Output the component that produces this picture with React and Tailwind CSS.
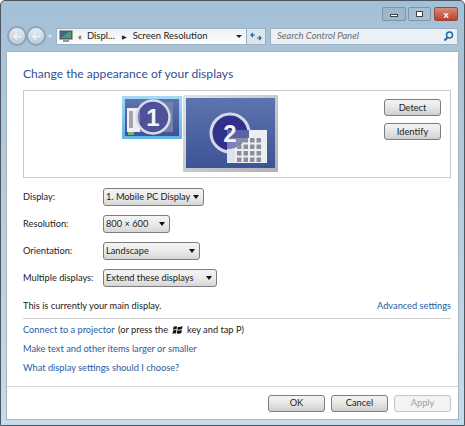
import React from "react";

const font = { fontFamily: 'Lato, "Noto Sans", sans-serif' };

function Btn({ children, disabled }) {
  return (
    <div className={`w-[57px] h-[17px] rounded-[3px] border flex items-center justify-center text-[9.25px] ${disabled ? "border-[#c4c4c4] bg-[#f3f3f3] text-[#a0a0a0]" : "border-[#7d7d7d] bg-gradient-to-b from-[#f4f4f4] via-[#e6e6e6] to-[#cfcfcf] text-[#222]"}`}>
      {children}
    </div>
  );
}

function Select({ w, label }) {
  return (
    <div className={`${w} h-[18px] rounded-[3px] border border-[#7d7d7d] bg-gradient-to-b from-[#f4f4f4] via-[#ebebeb] to-[#d6d6d6] flex items-center justify-between pl-[2px] pr-[4px] text-[9.25px] text-[#222]`}>
      <span className="whitespace-nowrap">{label}</span>
      <span className="w-0 h-0 border-l-[3px] border-r-[3px] border-t-[4px] border-l-transparent border-r-transparent border-t-[#111]" />
    </div>
  );
}

function Row({ label, w, value }) {
  return (
    <div className="flex items-center h-[18px]">
      <span className="w-[80px] text-[9.25px] text-[#222]">{label}</span>
      <Select w={w} label={value} />
    </div>
  );
}

function NavBall() {
  return (
    <div className="w-[20px] h-[20px] rounded-full border-2 border-[#8fa3b4] bg-gradient-to-b from-[#e4ecf2] to-[#bccbd8] flex items-center justify-center -mr-[1px]">
      <svg width="9" height="9" viewBox="0 0 9 9"><path d="M1 4.500h7M4 1.500l-3 3 3 3" stroke="#eef2f6" strokeWidth="1.600" fill="none" /></svg>
    </div>
  );
}

function Monitors() {
  const cells = [];
  for (let r = 0; r < 4; r++) for (let c = 0; c < 4; c++) cells.push(<rect key={`${r}-${c}`} x={117 + c * 6.500} y={44 + r * 6.500} width="4.500" height="4.500" fill="#8a8f9c" />);
  return (
    <svg width="160" height="80" viewBox="0 0 160 80">
      <defs>
        <linearGradient id="mg" x1="0" y1="0" x2="0" y2="1"><stop offset="0" stopColor="#5d74b0" /><stop offset="1" stopColor="#3d5395" /></linearGradient>
        <linearGradient id="sel" x1="0" y1="0" x2="0" y2="1"><stop offset="0" stopColor="#a8d8f4" /><stop offset="1" stopColor="#5fb4e8" /></linearGradient>
        <linearGradient id="fr" x1="0" y1="0" x2="1" y2="1"><stop offset="0" stopColor="#e0e2e4" /><stop offset="1" stopColor="#aeb2b6" /></linearGradient>
      </defs>
      <rect x="2" y="2" width="60" height="43" rx="1" fill="url(#sel)" />
      <rect x="5" y="5" width="54" height="37" fill="url(#mg)" />
      <rect x="7" y="14" width="26" height="24" fill="#f0f0f2" />
      <rect x="9" y="17" width="4" height="17" fill="#a4a4b0" />
      <rect x="20" y="8" width="33" height="30" fill="#7481ad" />
      <rect x="8" y="38" width="6" height="3" fill="#7fae6c" />
      <circle cx="33" cy="23" r="16.500" fill="#35368c" fillOpacity="0.6" stroke="#d9dcea" strokeWidth="2.500" />
      <text x="33" y="31.500" textAnchor="middle" fontFamily="Liberation Sans, sans-serif" fontWeight="700" fontSize="24" fill="#f4f4f8">1</text>
      <rect x="63" y="1" width="95" height="77" rx="1" fill="url(#fr)" />
      <rect x="66" y="4" width="89" height="70" fill="url(#mg)" />
      <circle cx="110" cy="39" r="19" fill="#2f318a" stroke="#d4d8e8" strokeWidth="3" />
      <rect x="107" y="36" width="40" height="33" fill="#eceef2" />
      <rect x="107" y="36" width="22" height="8" fill="#5d68a4" />
      <rect x="107" y="44" width="8" height="24" fill="#e0e2ea" />
      <path d="M107 36h20.500a19 19 0 0 1-20.500 19z" fill="#5a5fa8" fillOpacity="0.75" />
      {cells}
      <text x="110" y="48" textAnchor="middle" fontFamily="Liberation Sans, sans-serif" fontWeight="700" fontSize="24" fill="#f4f4f8">2</text>
    </svg>
  );
}

export default function App() {
  return (
    <div style={font} className="w-[465px] h-[426px] bg-gradient-to-b from-[#a4c0d6] to-[#c6dbec] border border-[#4c5660] rounded-t-[5px] overflow-hidden flex flex-col">
      <div className="flex justify-end pr-[6px] pt-[6px] h-[25px] gap-[2px]">
        <div className="w-[24px] h-[14px] rounded-[2px] border border-[#7d94aa] bg-[#9db7cd] flex items-center justify-center"><span className="w-[8px] h-[3px] border border-[#444] bg-white mt-[3px]" /></div>
        <div className="w-[23px] h-[14px] rounded-[2px] border border-[#7d94aa] bg-[#a6bfd3] flex items-center justify-center mr-[1px]"><span className="w-[7px] h-[6px] border border-[#444] bg-white" /></div>
        <div className="w-[24px] h-[14px] rounded-[2px] border border-[#9b4a3a] bg-gradient-to-b from-[#d98a78] to-[#b8402a] flex items-center justify-center text-white text-[10px] font-bold leading-none">x</div>
      </div>
      <div className="flex items-center h-[25px] pl-[6px] pr-[6px] pb-[5px]">
        <NavBall />
        <NavBall />
        <span className="ml-[3px] w-0 h-0 border-l-[2px] border-r-[2px] border-t-[3px] border-l-transparent border-r-transparent border-t-[#dbe6ee]" />
        <div className="ml-[4px] w-[191px] h-[17px] bg-gradient-to-b from-[#eef3f7] to-[#fbfcfd] border border-[#9fb2c2] flex items-center text-[9.5px] text-[#222]">
          <svg width="14" height="13" viewBox="0 0 14 13" className="ml-[2px]"><rect x="1" y="1" width="12" height="8" fill="#3a6a8c" stroke="#555" /><path d="M2 8l8-6h2v6z" fill="#4aa06a" /><rect x="4" y="10" width="6" height="2" fill="#999" /></svg>
          <span className="ml-[5px] text-[9px] leading-none">«</span>
          <span className="ml-[5px]">Displ...</span>
          <span className="ml-[7px] text-[6px]">▶</span>
          <span className="ml-[6px]">Screen Resolution</span>
          <span className="ml-auto mr-[4px] w-0 h-0 border-l-[3px] border-r-[3px] border-t-[3px] border-l-transparent border-r-transparent border-t-[#222]" />
        </div>
        <div className="w-[19px] h-[17px] border border-[#9fb2c2] border-l-0 bg-[#dbe6ef] flex items-center justify-center">
          <svg width="12" height="11" viewBox="0 0 12 11"><path d="M1 4h4M3 2L1 4l2 2M11 7H7M9 5l2 2-2 2" stroke="#1f6aa0" strokeWidth="1.200" fill="none" /></svg>
        </div>
        <div className="ml-[4px] flex-1 h-[17px] bg-[#eaf0f5] border border-[#9fb2c2] flex items-center justify-between pl-[6px] pr-[3px] text-[9.5px] italic text-[#6d6d6d]">
          <span>Search Control Panel</span>
          <svg width="11" height="11" viewBox="0 0 11 11"><circle cx="6.500" cy="4" r="3" fill="none" stroke="#1e6aa8" strokeWidth="1.500" /><path d="M4.500 6.500L1.500 9.500" stroke="#1e6aa8" strokeWidth="2" /></svg>
        </div>
      </div>
      <div className="mx-[5px] mb-[5px] flex-1 bg-white border border-[#a8b4bd] flex flex-col text-[#222]">
        <div className="flex-1 pl-[16px] pr-[7px] pt-[13px] flex flex-col">
          <div className="text-[12.1px] leading-[18px] text-[#2f4f90]">Change the appearance of your displays</div>
          <div className="mt-[7px] h-[88px] border border-[#c9c9c9] relative flex justify-end pr-[9px] pt-[8px]">
            <div className="absolute left-[96px] top-[3px]"><Monitors /></div>
            <div className="flex flex-col gap-[7px]">
              <Btn>Detect</Btn>
              <Btn>Identify</Btn>
            </div>
          </div>
          <div className="mt-[10px] flex flex-col gap-[9px]">
            <Row label="Display:" w="w-[101px]" value="1. Mobile PC Display" />
            <Row label="Resolution:" w="w-[67px]" value="800 × 600" />
            <Row label="Orientation:" w="w-[97px]" value="Landscape" />
            <Row label="Multiple displays:" w="w-[114px]" value="Extend these displays" />
          </div>
          <div className="mt-[12px] flex justify-between text-[9.25px] leading-[14px]">
            <span>This is currently your main display.</span>
            <span className="text-[#2a5b9c]">Advanced settings</span>
          </div>
          <div className="mt-[5px] border-t border-[#d0d0d0] pt-[4px] flex flex-col gap-[5px] text-[9.25px] leading-[14px] text-[#2a5b9c]">
            <div className="flex items-center"><span>Connect to a projector</span><span className="text-[#222] ml-[3.5px]">(or press the</span>
              <svg width="11" height="10" viewBox="0 0 11 10" className="ml-[4px] mr-[4px]"><path d="M1.500 2Q3 .8 5 1.500L4.500 4.500Q3 3.800 1 5zM5.800 1.700Q8 2.400 10.500 1L10 4Q8 5 5.300 4.500zM1 5.800Q3 4.600 4.400 5.300L4 8.500Q2 7.600.5 9zM5.200 5.300Q8 5.800 9.900 4.900L9.400 8Q7 9 4.800 8.500z" fill="#111" /></svg>
              <span className="text-[#222]">key and tap P)</span></div>
            <div>Make text and other items larger or smaller</div>
            <div>What display settings should I choose?</div>
          </div>
        </div>
        <div className="h-[33px] border-t border-[#d6d6d6] flex items-center justify-end gap-[6px] pr-[7px]">
          <Btn>OK</Btn>
          <Btn>Cancel</Btn>
          <Btn disabled>Apply</Btn>
        </div>
      </div>
    </div>
  );
}
